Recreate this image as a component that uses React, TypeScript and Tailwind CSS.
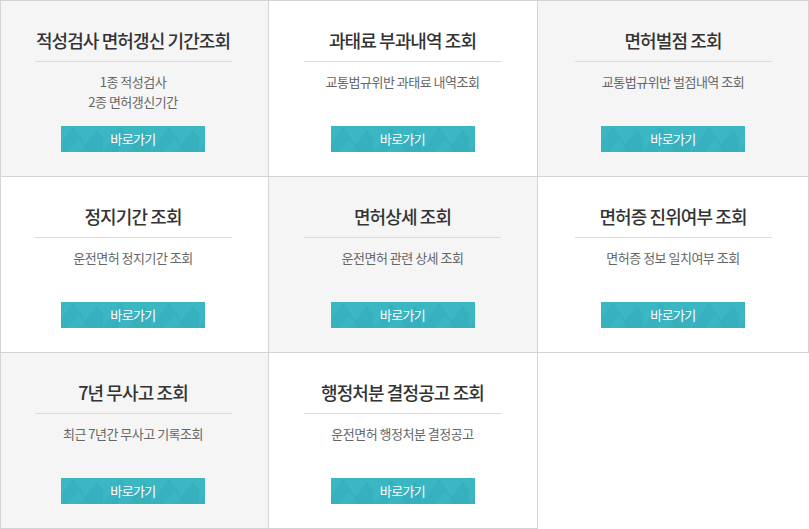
import React from 'react';

interface MenuItem {
  title: string;
  desc: string[];
}

const items: MenuItem[] = [
  { title: '적성검사 면허갱신 기간조회', desc: ['1종 적성검사', '2종 면허갱신기간'] },
  { title: '과태료 부과내역 조회', desc: ['교통법규위반 과태료 내역조회'] },
  { title: '면허벌점 조회', desc: ['교통법규위반 벌점내역 조회'] },
  { title: '정지기간 조회', desc: ['운전면허 정지기간 조회'] },
  { title: '면허상세 조회', desc: ['운전면허 관련 상세 조회'] },
  { title: '면허증 진위여부 조회', desc: ['면허증 정보 일치여부 조회'] },
  { title: '7년 무사고 조회', desc: ['최근 7년간 무사고 기록조회'] },
  { title: '행정처분 결정공고 조회', desc: ['운전면허 행정처분 결정공고'] },
];

const GoButton: React.FC = () => (
  <button className="relative w-[144px] h-[26px] bg-[#3bb6c3] overflow-hidden text-white text-[13px] tracking-[-0.6px] leading-[26px]">
    {/* triangle pattern */}
    <svg className="absolute inset-0" width="144" height="26" viewBox="0 0 144 26">
      <defs>
        <pattern id="tri" width="48" height="26" patternUnits="userSpaceOnUse" x="-6">
          <polygon points="0,26 18,0 36,26" fill="#2fa9b6" opacity="0.35" />
          <polygon points="24,26 42,4 60,26" fill="#2ea4b1" opacity="0.3" />
          <polygon points="14,26 24,13 34,26" fill="#48c0cc" opacity="0.25" />
        </pattern>
      </defs>
      <rect width="144" height="26" fill="url(#tri)" />
    </svg>
    <span className="relative">바로가기</span>
  </button>
);

const Cell: React.FC<{ item: MenuItem; index: number }> = ({ item, index }) => {
  const gray = index % 2 === 0;
  const col = index % 3;
  return (
    <div
      className={
        'h-[176px] border-r border-b border-[#d4d4d4] flex flex-col items-center pt-[27px] ' +
        (gray ? 'bg-[#f5f5f5] ' : 'bg-white ') +
        (col === 0 ? 'border-l pr-[3px] ' : '') +
        (col === 1 ? 'pr-[1px] ' : '') +
        (index < 3 ? 'border-t h-[177px]' : '')
      }
    >
      <h3 className="text-[18px] leading-[24px] tracking-[-0.9px] text-[#333] font-medium">{item.title}</h3>
      <div className="w-[197px] h-px bg-[#dcdcdc] mt-[9px]" />
      <div className="mt-[10px] h-[43px] text-[13px] leading-[20px] tracking-[-0.5px] text-[#666] text-center">
        {item.desc.map(d => (
          <p key={d}>{d}</p>
        ))}
      </div>
      <div className="mt-[10px]">
        <GoButton />
      </div>
    </div>
  );
};

export default function App() {
  return (
    <div
      className="w-[809px] h-[529px] bg-white"
      style={{ fontFamily: '"Noto Sans CJK KR", "Noto Sans", sans-serif' }}
    >
      <div className="grid grid-cols-[269px_269px_271px]">
        {items.map((item, i) => (
          <Cell key={item.title} item={item} index={i} />
        ))}
      </div>
    </div>
  );
}
